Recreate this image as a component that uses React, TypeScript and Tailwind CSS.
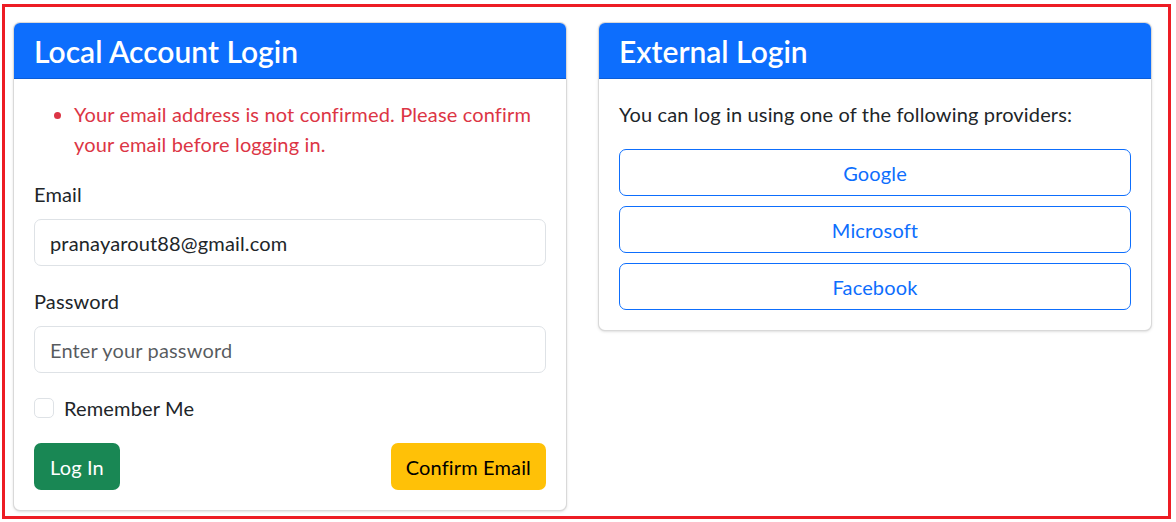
export default function App() {
  return (
    <div className="w-[1176px] h-[522px] bg-white text-[#212529] font-['Segoe_UI',Lato,'Noto_Sans',sans-serif]">
      <div className="ml-[2px] mt-[4px] w-[1169px] h-[515px] border-[3px] border-[#ed1c24]">
        <div className="flex items-start gap-[31px] pl-[8px] pt-[15px] pr-[16px]">
          {/* Local account */}
          <div className="w-[554px] rounded-[7px] border border-black/15 shadow-sm bg-white">
            <div className="bg-[#0d6efd] rounded-t-[6px] px-[20px] pt-[10px] pb-[9px] border-b border-black/15">
              <h3 className="text-[30px] leading-[36px] font-semibold text-white">Local Account Login</h3>
            </div>
            <div className="p-[20px] text-[20px] leading-[30px] tracking-[0.15px]">
              <ul className="list-disc pl-[40px] mb-[20px] text-[#dc3545] marker:text-[#dc3545]">
                <li>Your email address is not confirmed. Please confirm your email before logging in.</li>
              </ul>
              <div className="mb-[20px]">
                <label className="block mb-[10px]">Email</label>
                <input
                  type="email"
                  defaultValue="pranayarout88@gmail.com"
                  className="block w-full h-[47px] px-[15px] border border-[#dee2e6] rounded-[7px] text-[20px] tracking-[0.15px] text-[#212529] outline-none"
                />
              </div>
              <div className="mb-[20px]">
                <label className="block mb-[10px]">Password</label>
                <input
                  type="password"
                  placeholder="Enter your password"
                  className="block w-full h-[47px] px-[15px] border border-[#dee2e6] rounded-[7px] text-[20px] tracking-[0.15px] placeholder:text-[#212529]/75 outline-none"
                />
              </div>
              <label className="flex items-center gap-[10px] mb-[20px]">
                <span className="w-[20px] h-[20px] border border-[#dee2e6] rounded-[5px] bg-white" />
                <span>Remember Me</span>
              </label>
              <div className="flex justify-between">
                <button className="h-[47px] px-[16px] rounded-[7px] bg-[#198754] text-white text-[20px]">Log In</button>
                <button className="h-[47px] px-[15px] rounded-[7px] bg-[#ffc107] text-black text-[20px]">Confirm Email</button>
              </div>
            </div>
          </div>

          {/* External */}
          <div className="w-[554px] rounded-[7px] border border-black/15 shadow-sm bg-white">
            <div className="bg-[#0d6efd] rounded-t-[6px] px-[20px] pt-[10px] pb-[9px] border-b border-black/15">
              <h3 className="text-[30px] leading-[36px] font-semibold text-white">External Login</h3>
            </div>
            <div className="p-[20px] text-[20px] leading-[30px] tracking-[0.15px]">
              <p className="mb-[20px]">You can log in using one of the following providers:</p>
              <div className="flex flex-col gap-[10px]">
                {["Google", "Microsoft", "Facebook"].map((p) => (
                  <button
                    key={p}
                    className="w-full h-[47px] rounded-[7px] border border-[#0d6efd] text-[#0d6efd] text-[20px] bg-white"
                  >
                    {p}
                  </button>
                ))}
              </div>
            </div>
          </div>
        </div>
      </div>
    </div>
  );
}
